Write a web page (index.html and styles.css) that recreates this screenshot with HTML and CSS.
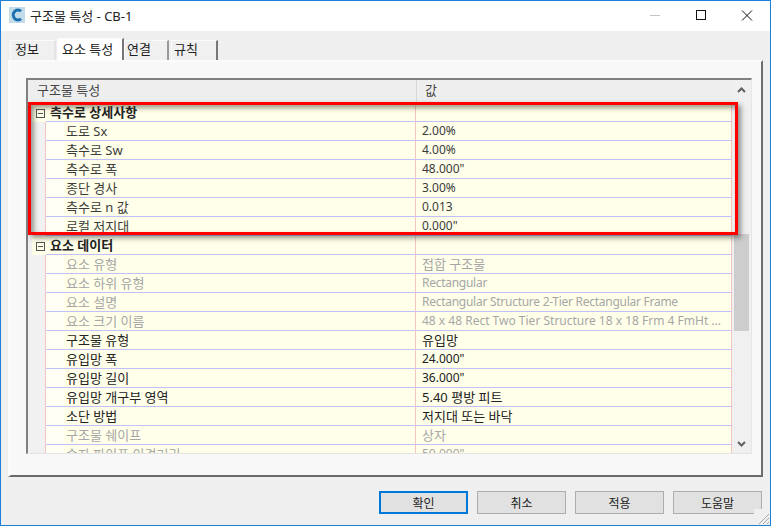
FILE: index.html
```html
<!DOCTYPE html>
<html lang="ko">
<head>
<meta charset="utf-8">
<title>구조물 특성 - CB-1</title>
<link rel="stylesheet" href="styles.css">
</head>
<body>
<div class="window">
  <header class="titlebar">
    <svg class="app-icon" width="16" height="16" viewBox="0 0 16 16"><rect width="16" height="16" fill="#c3dcea"/><path d="M12 4.3 A4.6 5 0 1 0 12 11.7" fill="none" stroke="#1c6fae" stroke-width="3"/></svg>
    <span class="title">구조물 특성 - CB-1</span>
    <div class="controls">
      <svg class="ctl" width="10" height="10" viewBox="0 0 10 10"><path d="M0 5.5H10" stroke="#c4c4c4"/></svg>
      <svg class="ctl" width="10" height="10" viewBox="0 0 10 10"><rect x=".5" y=".5" width="9" height="9" fill="none" stroke="#111"/></svg>
      <svg class="ctl" width="11" height="11" viewBox="0 0 11 11"><path d="M.5.5l10 10M10.5.5l-10 10" stroke="#111" fill="none"/></svg>
    </div>
  </header>
  <main class="content">
    <nav class="tabs">
      <div class="tab t1">정보</div>
      <div class="tab t2 active">요소 특성</div>
      <div class="tab t3">연결</div>
      <div class="tab t4">규칙</div>
    </nav>
    <section class="panel">
      <div class="grid">
        <div class="grid-main">
          <div class="head"><div class="hc name">구조물 특성</div><div class="hc val">값</div></div>
          <div class="rows">
            <div class="row group"><div class="gutter"><span class="box"></span></div><div class="name">측수로 상세사항</div><div class="val"></div></div>
            <div class="row dim"><div class="gutter"></div><div class="name">도로 Sx</div><div class="val">2.00%</div></div>
            <div class="row dim"><div class="gutter"></div><div class="name">측수로 Sw</div><div class="val">4.00%</div></div>
            <div class="row dim"><div class="gutter"></div><div class="name">측수로 폭</div><div class="val">48.000"</div></div>
            <div class="row dim"><div class="gutter"></div><div class="name">종단 경사</div><div class="val">3.00%</div></div>
            <div class="row dim"><div class="gutter"></div><div class="name">측수로 n 값</div><div class="val">0.013</div></div>
            <div class="row dim"><div class="gutter"></div><div class="name">로컬 저지대</div><div class="val">0.000"</div></div>
            <div class="row group"><div class="gutter"><span class="box"></span></div><div class="name">요소 데이터</div><div class="val"></div></div>
            <div class="row off"><div class="gutter"></div><div class="name">요소 유형</div><div class="val ko">접합 구조물</div></div>
            <div class="row off"><div class="gutter"></div><div class="name">요소 하위 유형</div><div class="val latin">Rectangular</div></div>
            <div class="row off"><div class="gutter"></div><div class="name">요소 설명</div><div class="val latin">Rectangular Structure 2-Tier Rectangular Frame</div></div>
            <div class="row off"><div class="gutter"></div><div class="name">요소 크기 이름</div><div class="val">48 x 48 Rect Two Tier Structure 18 x 18 Frm 4 FmHt ...</div></div>
            <div class="row"><div class="gutter"></div><div class="name">구조물 유형</div><div class="val ko">유입망</div></div>
            <div class="row"><div class="gutter"></div><div class="name">유입망 폭</div><div class="val">24.000"</div></div>
            <div class="row"><div class="gutter"></div><div class="name">유입망 길이</div><div class="val">36.000"</div></div>
            <div class="row"><div class="gutter"></div><div class="name">유입망 개구부 영역</div><div class="val ko">5.40 평방 피트</div></div>
            <div class="row"><div class="gutter"></div><div class="name">소단 방법</div><div class="val ko">저지대 또는 바닥</div></div>
            <div class="row off"><div class="gutter"></div><div class="name">구조물 쉐이프</div><div class="val ko">상자</div></div>
            <div class="row off"><div class="gutter"></div><div class="name">숫자 파이프 이격거리</div><div class="val">50.000"</div></div>
          </div>
        </div>
        <div class="scrollbar">
          <svg class="arrow" width="9" height="6" viewBox="0 0 9 6"><path d="M1 5l3.5-3.5L8 5" fill="none" stroke="#606060" stroke-width="2"/></svg>
          <div class="thumb"></div>
          <svg class="arrow" width="9" height="6" viewBox="0 0 9 6"><path d="M1 1l3.5 3.5L8 1" fill="none" stroke="#606060" stroke-width="2"/></svg>
        </div>
        <div class="highlight"></div>
      </div>
    </section>
    <footer class="buttons">
      <button class="btn primary">확인</button>
      <button class="btn">취소</button>
      <button class="btn">적용</button>
      <button class="btn">도움말</button>
    </footer>
    <div class="notch"></div>
    <svg class="grip" width="11" height="11" viewBox="0 0 11 11"><path d="M11 1L1 11M11 5L5 11M11 9L9 11" stroke="#a8a8a8" fill="none"/></svg>
  </main>
</div>
</body>
</html>
```
FILE: styles.css
```css
* { box-sizing: border-box; }
html, body { margin: 0; padding: 0; }
body {
  width: 771px;
  height: 526px;
  overflow: hidden;
  font-family: "Noto Sans", "Noto Sans CJK KR", sans-serif;
  font-size: 12px;
  color: #333;
}
.window {
  width: 771px;
  height: 526px;
  border: 1px solid #1b80d8;
  display: flex;
  flex-direction: column;
  background: #efefef;
  position: relative;
}
.titlebar {
  height: 30px;
  flex: none;
  background: #fff;
  display: flex;
  align-items: center;
  padding: 0 0 2px 8px;
}
.app-icon { flex: none; }
.title { margin-left: 5px; font-size: 13px; color: #222; }
.controls { margin-left: auto; display: flex; align-items: center; }
.ctl { width: 46px; flex: none; }
.content {
  flex: 1;
  padding: 6px 7px 0 7px;
  display: flex;
  flex-direction: column;
  position: relative;
}
.tabs { height: 23px; display: flex; align-items: flex-end; flex: none; padding-left: 2px; }
.tab {
  height: 20px;
  background: #f0f0f0;
  border-top: 1px solid #fafafa;
  border-left: 1px solid #fafafa;
  border-right: 2px solid #777;
  padding: 0 0 0 4px;
  font-size: 13px;
  line-height: 17px;
  color: #222;
}
.tab.t1 { width: 46px; margin-right: 1px; border-right-color: #e4e4e4; }
.tab.t2 { width: 67px; height: 22px; line-height: 21px; background: #fff; padding-left: 4px; }
.tab.t3 { width: 45px; padding-left: 2px; margin-right: 2px; border-right-color: #999; }
.tab.t4 { width: 47px; padding-left: 2px; }
.panel {
  height: 417px;
  flex: none;
  background: #f8f8f8;
  border-top: 2px solid #fbfbfb;
  border-left: 3px solid #fbfbfb;
  border-right: 2px solid #6e6e6e;
  border-bottom: 2px solid #696969;
  padding: 16px 9px 20px 15px;
}
.grid {
  height: 376px;
  display: flex;
  position: relative;
  border-top: 2px solid #808080;
  border-left: 2px solid #808080;
  border-right: 1px solid #e6e6e6;
  border-bottom: 1px solid #e3e3e3;
  background: #f0f0f0;
}
.grid-main { flex: 1; min-width: 0; display: flex; flex-direction: column; overflow: hidden; }
.head { height: 23px; flex: none; display: flex; background: #eeeeee; font-size: 13px; line-height: 20px; color: #444; }
.hc.name { width: 389px; padding-left: 9px; border-right: 1px solid #d8d8d8; }
.hc.val { padding-left: 8px; }
.rows { flex: 1; overflow: hidden; }
.row {
  height: 19px;
  display: flex;
  line-height: 17px;
  background: #ffffea;
  color: #222;
}
.row.dim { color: #3c3c3c; }
.gutter {
  width: 18px;
  flex: none;
  background: #f1f1f1;
  border-right: 1px solid #f4c4c4;
  position: relative;
}
.row .name {
  width: 370px;
  flex: none;
  padding-left: 20px;
  font-size: 13px;
  line-height: 19px;
  background: linear-gradient(#fffff5, #fffff5) left top / 18px 100% no-repeat;
  border-bottom: 1px solid #c0c0fb;
  border-right: 1px solid #f4c4c4;
  white-space: nowrap;
}
.row .val {
  flex: 1;
  min-width: 0;
  padding-left: 6px;
  border-bottom: 1px solid #c0c0fb;
  border-right: 1px solid #f4c4c4;
  white-space: nowrap;
  overflow: hidden;
}
.row .val.ko { font-size: 13px; line-height: 19px; }
.row .val.latin { letter-spacing: -.27px; }
.row.off .name, .row.off .val { color: #a6a6a6; }
.row.group .name { padding-left: 4px; font-weight: 700; background: none; }
.row.group .gutter {
  background: linear-gradient(#f1f1f1, #f1f1f1) left top / 4px 100% no-repeat, #ffffea;
  border-right: 0;
}
.box {
  position: absolute;
  left: 8px;
  top: 6px;
  width: 9px;
  height: 9px;
  border: 1px solid #555;
  background: linear-gradient(#555, #555) center / 5px 1px no-repeat;
}
.scrollbar {
  width: 17px;
  margin-left: 2px;
  flex: none;
  background: #f0f0f0;
  display: flex;
  flex-direction: column;
  align-items: flex-start;
  padding-top: 7px;
  position: relative;
}
.arrow { flex: none; margin-left: 3px; }
.arrow:last-child { position: absolute; bottom: 6px; left: 0; }
.thumb { width: 15px; height: 97px; margin-top: 141px; background: #cdcdcd; }
.highlight {
  position: absolute;
  left: 0;
  top: 22px;
  width: 710px;
  height: 133px;
  border: 3px solid #ff0000;
  box-shadow: 3px 3px 5px rgba(60, 60, 60, .55), inset 3px 3px 5px rgba(60, 60, 40, .5);
}
.buttons {
  display: flex;
  gap: 9px;
  justify-content: flex-end;
  padding-top: 14px;
  padding-right: 1px;
}
.btn {
  width: 89px;
  height: 23px;
  padding: 0;
  background: #e1e1e1;
  border: 1px solid #adadad;
  font: 12px "Noto Sans", "Noto Sans CJK KR", sans-serif;
  color: #222;
}
.btn.primary { border: 2px solid #0078d7; }
.notch { position: absolute; right: 8px; bottom: 11px; width: 8px; height: 5px; background: #efefef; }
.grip { position: absolute; right: 1px; bottom: 1px; }
```
